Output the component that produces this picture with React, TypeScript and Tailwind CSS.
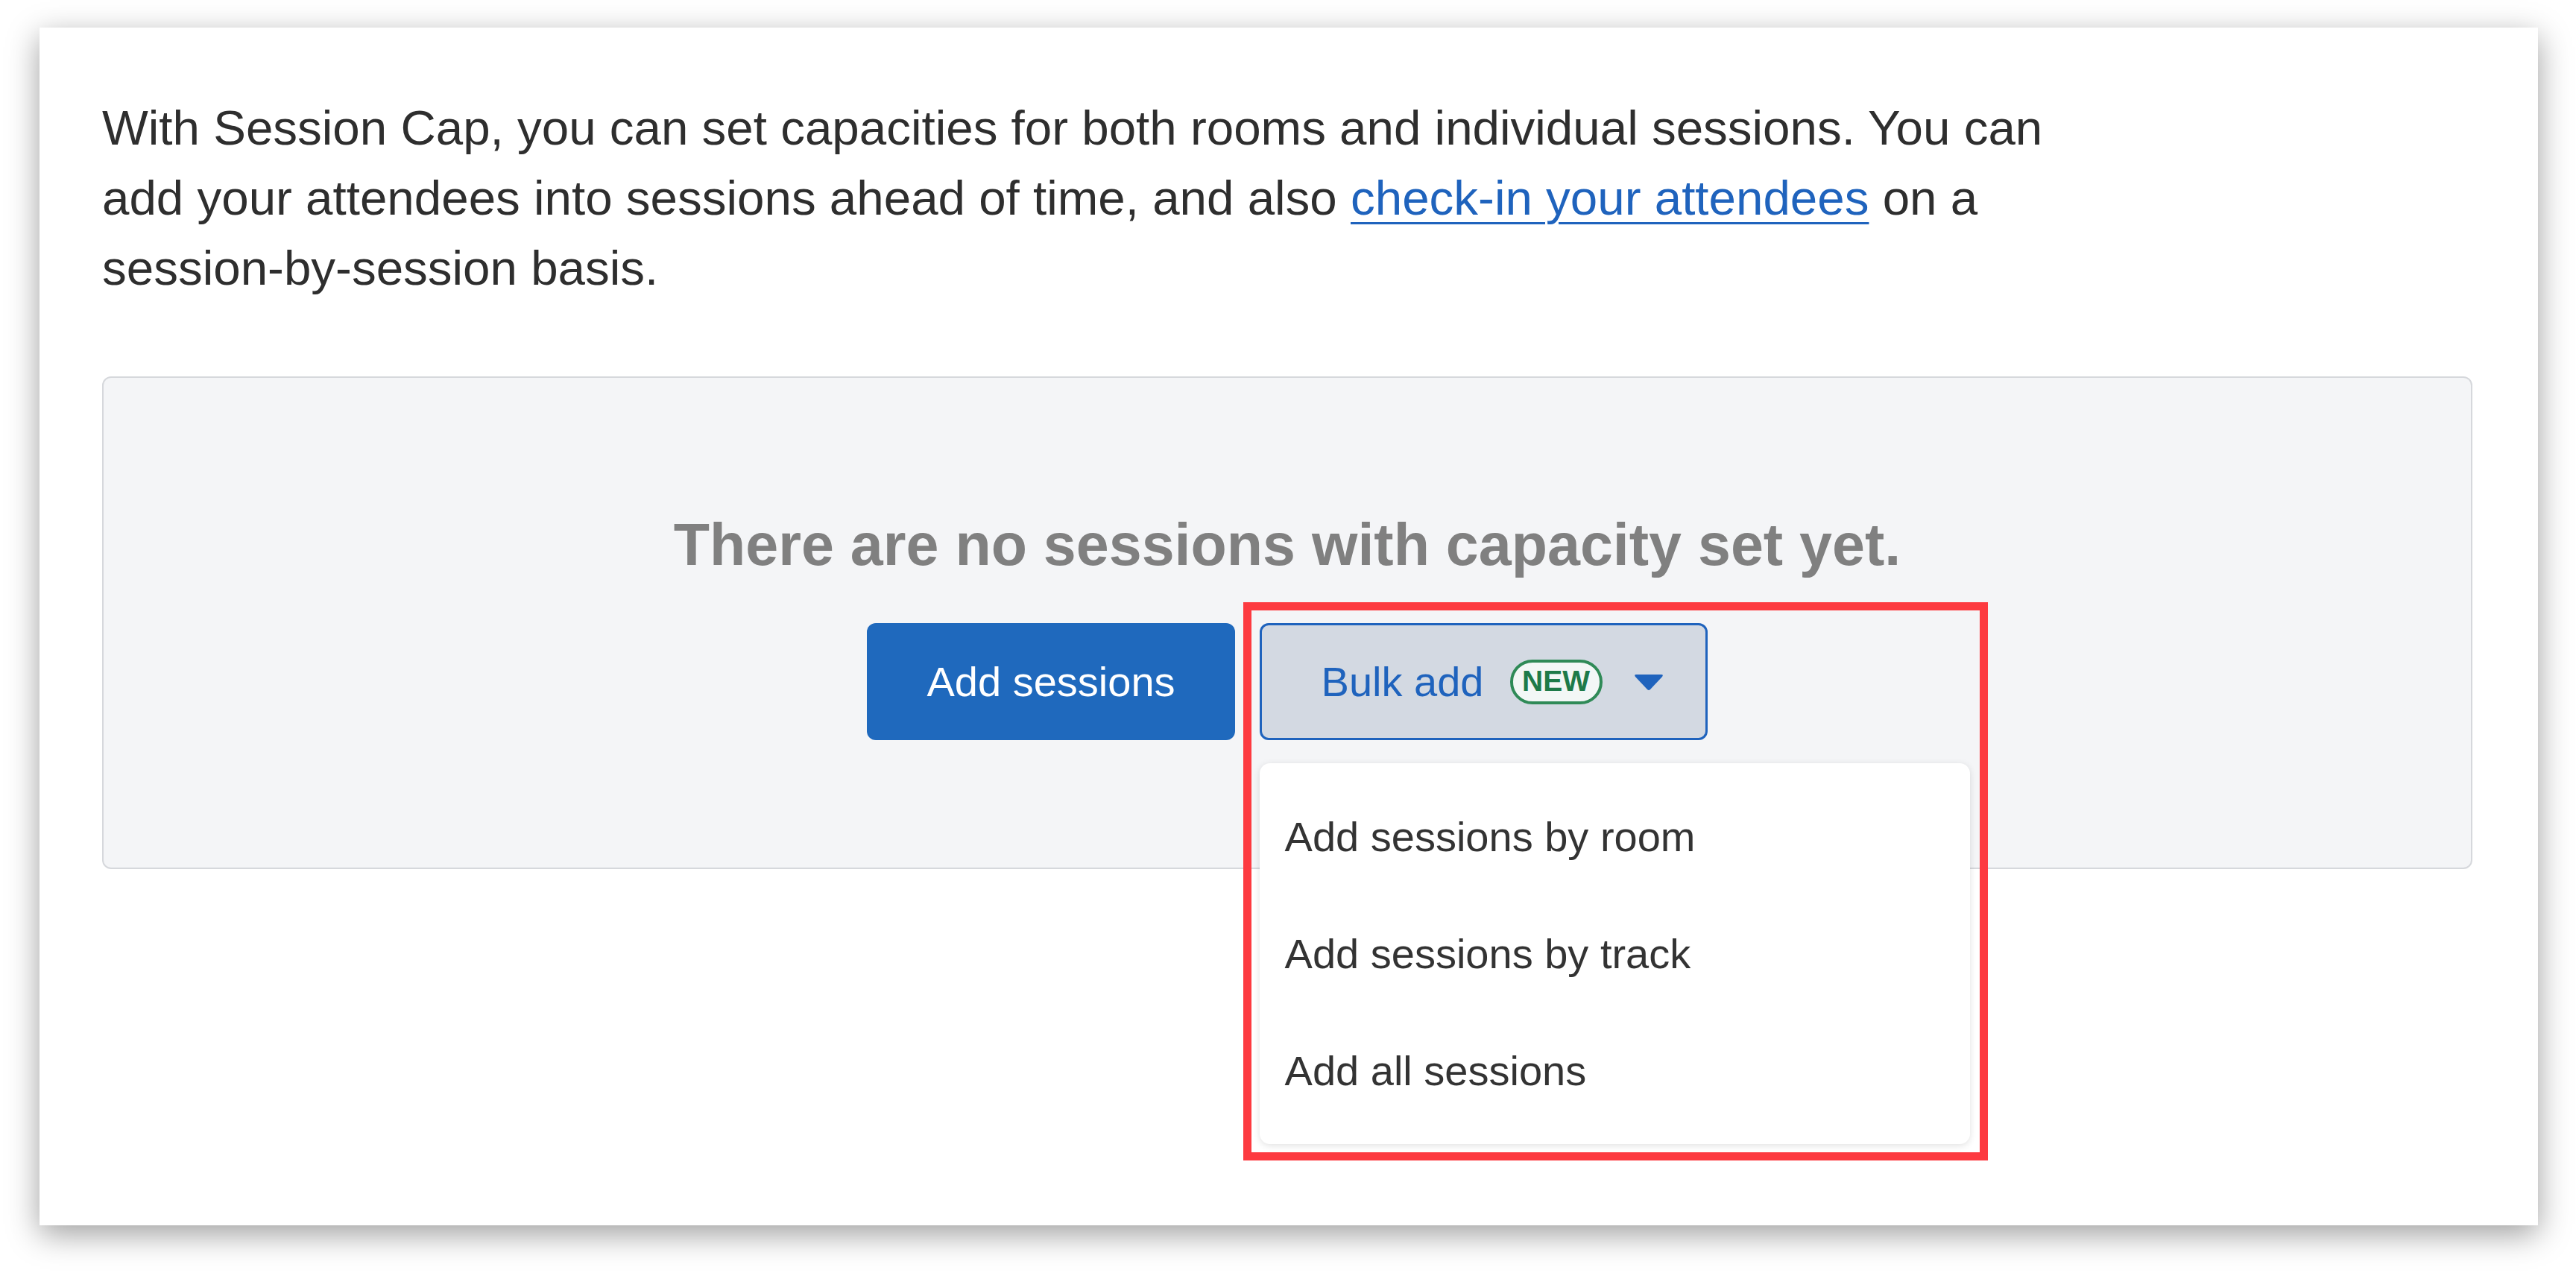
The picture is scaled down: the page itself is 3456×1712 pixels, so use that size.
import { useState } from "react";

const menuItems = ["Add sessions by room", "Add sessions by track", "Add all sessions"];

function Caret() {
  return (
    <svg width="40" height="24" viewBox="0 0 40 24" className="shrink-0">
      <path d="M3 2 H37 Q40 2 38 5 L22 22 Q20 24 18 22 L2 5 Q0 2 3 2 Z" fill="#1f63bd" />
    </svg>
  );
}

const BulkAddButton = () => {
  const [open] = useState(true);

  return (
    <div className="relative">
      <button className="flex items-center h-[157px] pl-[80px] pr-[56px] bg-[#d3d9e2] border-[3px] border-[#1f63bd] rounded-[12px] text-[56px] text-[#1f63bd]">
        <span>Bulk add</span>
        <span className="ml-[35px] flex items-center justify-center w-[124px] h-[60px] rounded-full border-[4px] border-[#2f8a57] bg-[#f3f7f6] text-[39px] font-bold text-[#1e7a49]">
          NEW
        </span>
        <span className="ml-[42px] flex">
          <Caret />
        </span>
      </button>

      {open && (
        <div className="absolute left-0 top-[188px] z-10 w-[953px] py-[20px] bg-white rounded-[14px] shadow-[0_2px_10px_rgba(0,0,0,0.12)]">
          {menuItems.map((item) => (
            <div key={item} className="h-[157px] flex items-center px-[34px] text-[56px] text-[#333333]">
              {item}
            </div>
          ))}
        </div>
      )}

      {/* annotation box round the dropdown */}
      <div className="absolute -left-[22px] -top-[28px] w-[999px] h-[749px] border-[11px] border-[#fd3a40] z-20 pointer-events-none" />
    </div>
  );
};

export default function App() {
  return (
    <div className="w-[3456px] h-[1712px] bg-white pl-[53px] pt-[37px] font-['Liberation_Sans',Arial,sans-serif]">
      <div className="w-[3352px] h-[1607px] bg-white shadow-[0_12px_40px_rgba(0,0,0,0.38)] pl-[84px] pt-[88px]">
        <p className="w-[2680px] text-[65.5px] leading-[94px] text-[#2e2e2e]">
          With Session Cap, you can set capacities for both rooms and individual sessions. You can add your attendees
          into sessions ahead of time, and also{" "}
          <a href="#" className="text-[#1f63bd] underline decoration-[3px] underline-offset-[10px]">
            check-in your attendees
          </a>{" "}
          on a <span className="whitespace-nowrap">session-by-session</span> basis.
        </p>

        <div className="mt-[98px] w-[3180px] h-[661px] bg-[#f4f5f7] border-2 border-[#d6d8dc] rounded-[12px] flex flex-col items-center pt-[178px]">
          <h2 className="text-[79px] leading-[92px] font-bold text-[#808080]">
            There are no sessions with capacity set yet.
          </h2>
          <div className="mt-[59px] flex items-start gap-[33px]">
            <button className="h-[157px] px-[80px] bg-[#1f69bd] rounded-[12px] text-[56px] text-white">
              Add sessions
            </button>
            <BulkAddButton />
          </div>
        </div>
      </div>
    </div>
  );
}
